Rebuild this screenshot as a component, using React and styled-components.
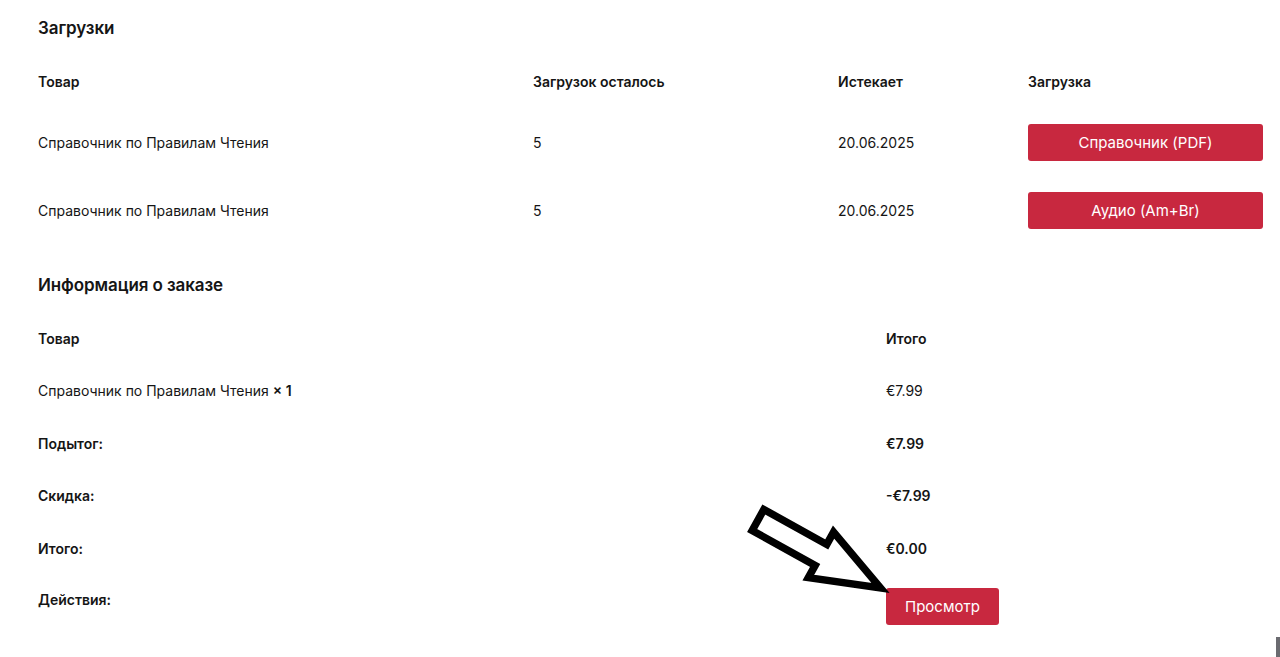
import React from 'react';
import styled, { createGlobalStyle } from 'styled-components';

const GlobalStyle = createGlobalStyle`
  html, body {
    margin: 0;
    padding: 0;
    background: #fff;
  }
  body {
    font-family: Inter, "Noto Sans", "Liberation Sans", sans-serif;
    color: #151515;
    -webkit-font-smoothing: antialiased;
  }
`;

const downloads = [
  { product: 'Справочник по Правилам Чтения', left: 5, expires: '20.06.2025', file: 'Справочник (PDF)' },
  { product: 'Справочник по Правилам Чтения', left: 5, expires: '20.06.2025', file: 'Аудио (Am+Br)' },
];

const totals = [
  { label: 'Подытог:', value: '€7.99' },
  { label: 'Скидка:', value: '-€7.99' },
  { label: 'Итого:', value: '€0.00' },
];

const App = () => (
  <Page>
    <GlobalStyle />
    <Section>
      <Title>Загрузки</Title>
      <DownloadsTable>
        <HeadCell>Товар</HeadCell>
        <HeadCell>Загрузок осталось</HeadCell>
        <HeadCell>Истекает</HeadCell>
        <HeadCell>Загрузка</HeadCell>
        {downloads.map((d, i) => (
          <React.Fragment key={i}>
            <BodyCell>{d.product}</BodyCell>
            <BodyCell>{d.left}</BodyCell>
            <BodyCell>{d.expires}</BodyCell>
            <BodyCell>
              <RedButton $wide>{d.file}</RedButton>
            </BodyCell>
          </React.Fragment>
        ))}
      </DownloadsTable>
    </Section>

    <Section $gap={28}>
      <Title>Информация о заказе</Title>
      <OrderTable>
        <HeadCell $h={52}>Товар</HeadCell>
        <HeadCell $h={52}>Итого</HeadCell>
        <BodyCell $h={53}>
          Справочник по Правилам Чтения <b>× 1</b>
        </BodyCell>
        <BodyCell $h={53}>€7.99</BodyCell>
        {totals.map(t => (
          <React.Fragment key={t.label}>
            <HeadCell $h={52.5}>{t.label}</HeadCell>
            <HeadCell $h={52.5}>{t.value}</HeadCell>
          </React.Fragment>
        ))}
        <ActionLabel>Действия:</ActionLabel>
        <ActionCell>
          <RedButton>Просмотр</RedButton>
          <Pointer width="160" height="110" viewBox="0 0 160 110">
            <g transform="translate(18 25) rotate(29)">
              <polygon
                points="0,-12 72,-12 72,-26 140,0 72,26 72,12 0,12"
                fill="#fff"
                stroke="#000"
                strokeWidth="7.5"
                strokeLinejoin="miter"
              />
            </g>
          </Pointer>
        </ActionCell>
      </OrderTable>
    </Section>
    <ScrollStub />
  </Page>
);

export default App;

const Page = styled.div`
  position: relative;
  width: 1280px;
  height: 657px;
  box-sizing: border-box;
  padding: 15px 17px 0 38px;
  overflow: hidden;
`;

const Section = styled.section`
  display: flex;
  flex-direction: column;
  margin-top: ${p => p.$gap || 0}px;
`;

const Title = styled.h2`
  margin: 0;
  height: 26px;
  line-height: 26px;
  font-size: 17px;
  font-weight: 600;
  letter-spacing: -0.1px;
`;

const DownloadsTable = styled.div`
  display: grid;
  grid-template-columns: 495px 305px 190px 1fr;
  margin-top: 13px;
`;

const OrderTable = styled.div`
  display: grid;
  grid-template-columns: 848px 1fr;
  margin-top: 14px;
`;

const HeadCell = styled.div`
  display: flex;
  align-items: center;
  height: ${p => p.$h || 54}px;
  font-size: 14px;
  font-weight: 600;
  line-height: 17px;
`;

const BodyCell = styled.div`
  display: flex;
  align-items: center;
  height: ${p => p.$h || 68}px;
  font-size: 14px;
  font-weight: 400;
  line-height: 17px;
  white-space: pre;

  b {
    font-weight: 600;
  }
`;

const ActionLabel = styled.div`
  padding-top: 16px;
  font-size: 14px;
  font-weight: 600;
  line-height: 17px;
`;

const ActionCell = styled.div`
  position: relative;
  padding-top: 13px;
`;

const RedButton = styled.button`
  display: block;
  width: ${p => (p.$wide ? '100%' : 'auto')};
  height: 37px;
  padding: 0 19px;
  border: none;
  border-radius: 3px;
  background: #c8283f;
  color: #fff;
  font-family: inherit;
  font-size: 15px;
  font-weight: 400;
  cursor: pointer;
`;

const Pointer = styled.svg`
  position: absolute;
  left: -146px;
  top: -80px;
  overflow: visible;
`;

const ScrollStub = styled.div`
  position: absolute;
  right: 0;
  bottom: 0;
  width: 4px;
  height: 20px;
  background: #6b6b70;
`;
